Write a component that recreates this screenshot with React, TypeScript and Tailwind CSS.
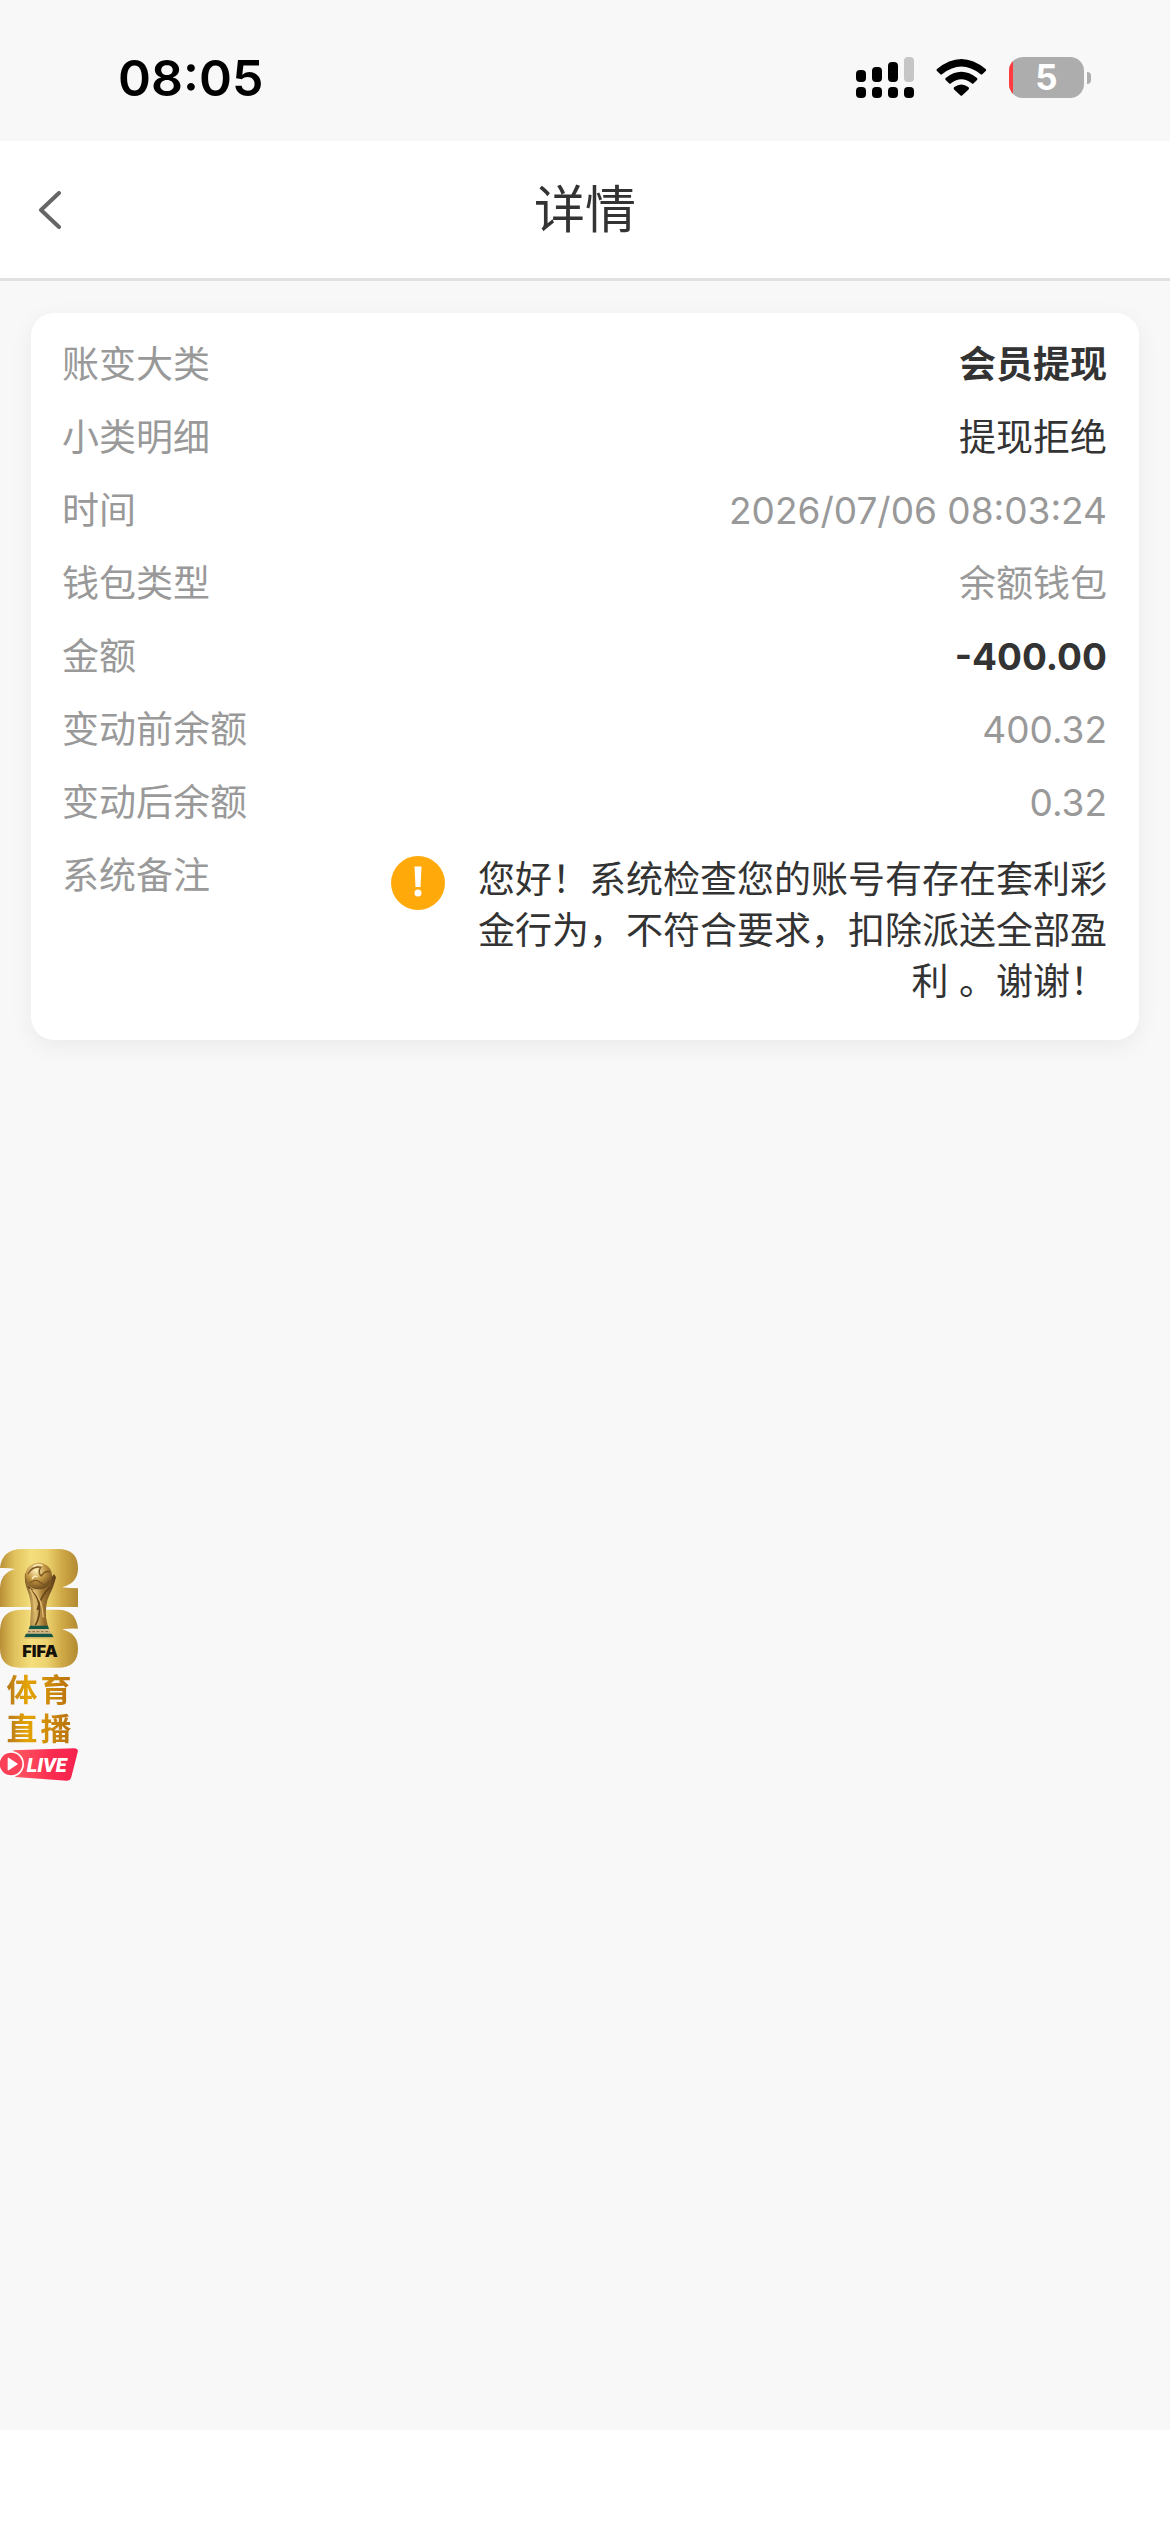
import React from "react";

type Row = { label: string; value: string; tone: string };

const rows: Row[] = [
  { label: "账变大类", value: "会员提现", tone: "font-bold text-[#333333]" },
  { label: "小类明细", value: "提现拒绝", tone: "text-[#333333]" },
  { label: "时间", value: "2026/07/06 08:03:24", tone: "text-[#999999]" },
  { label: "钱包类型", value: "余额钱包", tone: "text-[#999999]" },
  { label: "金额", value: "-400.00", tone: "font-bold text-[#333333]" },
  { label: "变动前余额", value: "400.32", tone: "text-[#999999]" },
  { label: "变动后余额", value: "0.32", tone: "text-[#999999]" },
];

function SignalIcon() {
  return (
    <svg width="58" height="41" viewBox="0 0 58 41" aria-hidden="true">
      <rect x="0" y="13" width="10" height="12" rx="4" />
      <rect x="16" y="10" width="10" height="15" rx="4" />
      <rect x="32" y="5" width="10" height="20" rx="4" />
      <rect x="48" y="0" width="10" height="25" rx="4" fill="#c6c6c6" />
      <rect x="0" y="30" width="10" height="11" rx="4" />
      <rect x="16" y="30" width="10" height="11" rx="4" />
      <rect x="32" y="30" width="10" height="11" rx="4" />
      <rect x="48" y="30" width="10" height="11" rx="4" />
    </svg>
  );
}

function WifiIcon() {
  return (
    <svg width="51" height="37" viewBox="0 0 153 111" aria-hidden="true">
      <path d="M3 30 Q0 33 3 36 L13 46 Q16 48 19 45 Q76 0 133 45 Q136 48 139 46 L149 36 Q152 33 149 30 Q76 -30 3 30Z" />
      <path d="M29 57 Q26 60 29 63 L39 73 Q42 76 45 73 Q76 48 107 73 Q110 76 113 73 L123 63 Q126 60 123 57 Q76 20 29 57Z" />
      <path d="M55 84 Q51 88 55 92 L73 109 Q76 112 79 109 L97 92 Q101 88 97 84 Q76 69 55 84Z" />
    </svg>
  );
}

function Battery() {
  return (
    <div className="flex items-center gap-[3px]">
      <div className="flex h-[41px] w-[75px] items-center overflow-hidden rounded-[14px] bg-[#adadad]">
        <span className="h-full w-1 bg-[#ff3b40]" />
        <span className="flex-1 pr-1 text-center text-[35px] leading-none font-bold text-white">5</span>
      </div>
      <span className="h-3 w-1 rounded-r-full bg-[#adadad]" />
    </div>
  );
}

function CupLogo() {
  return (
    <svg className="block" width="78" height="119" viewBox="0 57 234 357" aria-hidden="true">
      <defs>
        <linearGradient id="gold" x1="0" x2="1" y1="0" y2="0">
          <stop offset="0" stopColor="#b98f35" />
          <stop offset="0.18" stopColor="#dfc05c" />
          <stop offset="0.4" stopColor="#f4df7c" />
          <stop offset="0.6" stopColor="#ecd26e" />
          <stop offset="0.8" stopColor="#cfa846" />
          <stop offset="1" stopColor="#b28a32" />
        </linearGradient>
        <linearGradient id="cup" x1="0" x2="1" y1="0" y2="0">
          <stop offset="0" stopColor="#7a541f" />
          <stop offset="0.35" stopColor="#dcb96c" />
          <stop offset="0.6" stopColor="#9c722f" />
          <stop offset="1" stopColor="#573a16" />
        </linearGradient>
        <radialGradient id="globe" cx="0.4" cy="0.3" r="0.75">
          <stop offset="0" stopColor="#fff0b8" />
          <stop offset="0.5" stopColor="#c0933f" />
          <stop offset="1" stopColor="#64431a" />
        </radialGradient>
      </defs>
      <path fill="url(#gold)" d="M0 114 Q6 57 66 57 H174 Q234 57 234 115 Q234 160 186 172 Q208 175 234 175 V231 H0 V174 Q2 128 46 117 Q25 113 0 114Z" />
      <path fill="url(#gold)" d="M66 239 H174 Q228 239 234 296 Q208 295 186 298 Q234 310 234 356 Q234 413 174 413 H60 Q0 413 0 354 V300 Q2 239 66 239Z" />
      <path fill="url(#cup)" d="M75 130 Q72 155 82 180 Q94 210 93 240 L90 290 H144 L138 262 Q136 220 148 196 Q160 174 168 142 L162 132 L148 150 Z" />
      <circle cx="116" cy="138" r="40" fill="url(#globe)" />
      <path d="M84 132 Q98 106 122 112 Q112 128 124 138 Q136 120 150 126 M90 158 Q108 144 122 158 Q134 172 148 152" fill="none" stroke="#7a5520" strokeWidth="4" />
      <path d="M100 110 Q112 100 128 106 M96 148 Q102 134 112 140" fill="none" stroke="#fff0c0" strokeWidth="4" />
      <path d="M84 170 Q112 190 118 226 Q122 256 106 286 M152 170 Q122 196 112 240" fill="none" stroke="#684617" strokeWidth="5" />
      <path d="M98 180 Q126 204 130 262 M90 176 Q104 200 104 246" fill="none" stroke="#e2bf72" strokeWidth="4" />
      <path fill="#145644" d="M90 287 H144 L147 297 H86Z" />
      <path fill="#d2b98a" d="M86 297 H147 L153 312 H80Z" />
      <path d="M84 305 H150" stroke="#8d6b38" strokeWidth="3" strokeDasharray="8 5" />
      <path fill="#145644" d="M78 311 H155 L161 322 H73Z" />
      <path d="M73 324 H161" stroke="#d8b76a" strokeWidth="4" />
      <text x="120" y="380" textAnchor="middle" fontFamily="Inter, sans-serif" fontWeight="900" fontSize="49" fill="#15110a">FIFA</text>
    </svg>
  );
}

function LiveTag() {
  return (
    <svg className="block" width="78" height="33" viewBox="0 655 234 99" aria-hidden="true">
      <defs>
        <linearGradient id="live" x1="0" x2="1" y1="0" y2="0">
          <stop offset="0" stopColor="#ff5a62" />
          <stop offset="0.6" stopColor="#fb2c50" />
          <stop offset="1" stopColor="#f5224f" />
        </linearGradient>
      </defs>
      <path fill="url(#live)" d="M40 662 L222 656 Q236 656 233 668 L214 742 Q211 754 200 753 L46 742 Z" />
      <circle cx="33" cy="703" r="39" fill="#fff" />
      <circle cx="33" cy="703" r="34" fill="#fb4158" />
      <path d="M25 686 L51 703 L25 720 Z" fill="#fff" stroke="#fff" strokeWidth="4" strokeLinejoin="round" />
      <text x="140" y="726" textAnchor="middle" fontFamily="Roboto, sans-serif" fontStyle="italic" fontWeight="900" fontSize="60" fill="#fff">LIVE</text>
    </svg>
  );
}

export default function App() {
  return (
    <div className="relative flex min-h-screen flex-col bg-[#f8f8f8] font-[Inter,'Noto_Sans_CJK_SC',sans-serif]">
      <div className="flex h-[141px] items-center justify-between pt-[14px] pr-[79px] pl-[118px] text-black">
        <span className="text-[50px] leading-none font-semibold">08:05</span>
        <div className="flex items-center gap-[22px]">
          <SignalIcon />
          <WifiIcon />
          <Battery />
        </div>
      </div>

      <header className="grid h-[140px] grid-cols-[1fr_auto_1fr] items-center border-b-[3px] border-[#e1e1e1] bg-white">
        <button type="button" aria-label="返回" className="justify-self-start py-6 pr-6 pl-[38px]">
          <svg width="24" height="38" viewBox="0 0 24 38" fill="none" stroke="#666666" strokeWidth="4" strokeLinecap="round" strokeLinejoin="round" aria-hidden="true">
            <path d="M21 2 L3 19 L21 36" />
          </svg>
        </button>
        <h1 className="text-[51px] leading-[72px] text-[#333333]">详情</h1>
      </header>

      <main className="flex-1 px-[31px] pt-8">
        <dl className="rounded-[23px] bg-white pt-[15px] pr-8 pb-[33px] pl-[31px] text-[37px] shadow-[0_6px_24px_rgba(0,0,0,0.06)]">
          {rows.map((row) => (
            <div key={row.label} className="flex h-[73px] items-center justify-between">
              <dt className="text-[#999999]">{row.label}</dt>
              <dd className={row.tone}>{row.value}</dd>
            </div>
          ))}
          <div className="flex items-start justify-between">
            <dt className="leading-[74px] text-[#999999]">系统备注</dt>
            <dd className="flex items-start gap-8 pt-[15px]">
              <svg className="mt-[2px] shrink-0" width="54" height="54" viewBox="0 0 54 54" role="img" aria-label="提示">
                <circle cx="27" cy="27" r="27" fill="#ffaa0a" />
                <path d="M23.500 10.500 H30.500 L29.500 31 H24.500Z" fill="#fff" />
                <circle cx="27" cy="37" r="3.500" fill="#fff" />
              </svg>
              <p className="max-w-[630px] text-right leading-[51px] text-[#333333]">
                您好！系统检查您的账号有存在套利彩金行为，不符合要求，扣除派送全部盈利 。谢谢！
              </p>
            </dd>
          </div>
        </dl>
      </main>

      <footer className="h-[102px] bg-white" />

      <a href="#live" className="absolute top-[1549px] left-0 flex w-[78px] flex-col">
        <CupLogo />
        <span className="mt-[2px] flex flex-col bg-linear-to-r from-[#a86a1c] via-[#e5a400] via-35% to-[#b06a10] bg-clip-text text-center text-[31px] leading-[39px] font-bold text-transparent">
          <span className="flex justify-center gap-[3px]"><span>体</span><span>育</span></span>
          <span className="flex justify-center gap-[3px]"><span>直</span><span>播</span></span>
        </span>
        <LiveTag />
      </a>
    </div>
  );
}
